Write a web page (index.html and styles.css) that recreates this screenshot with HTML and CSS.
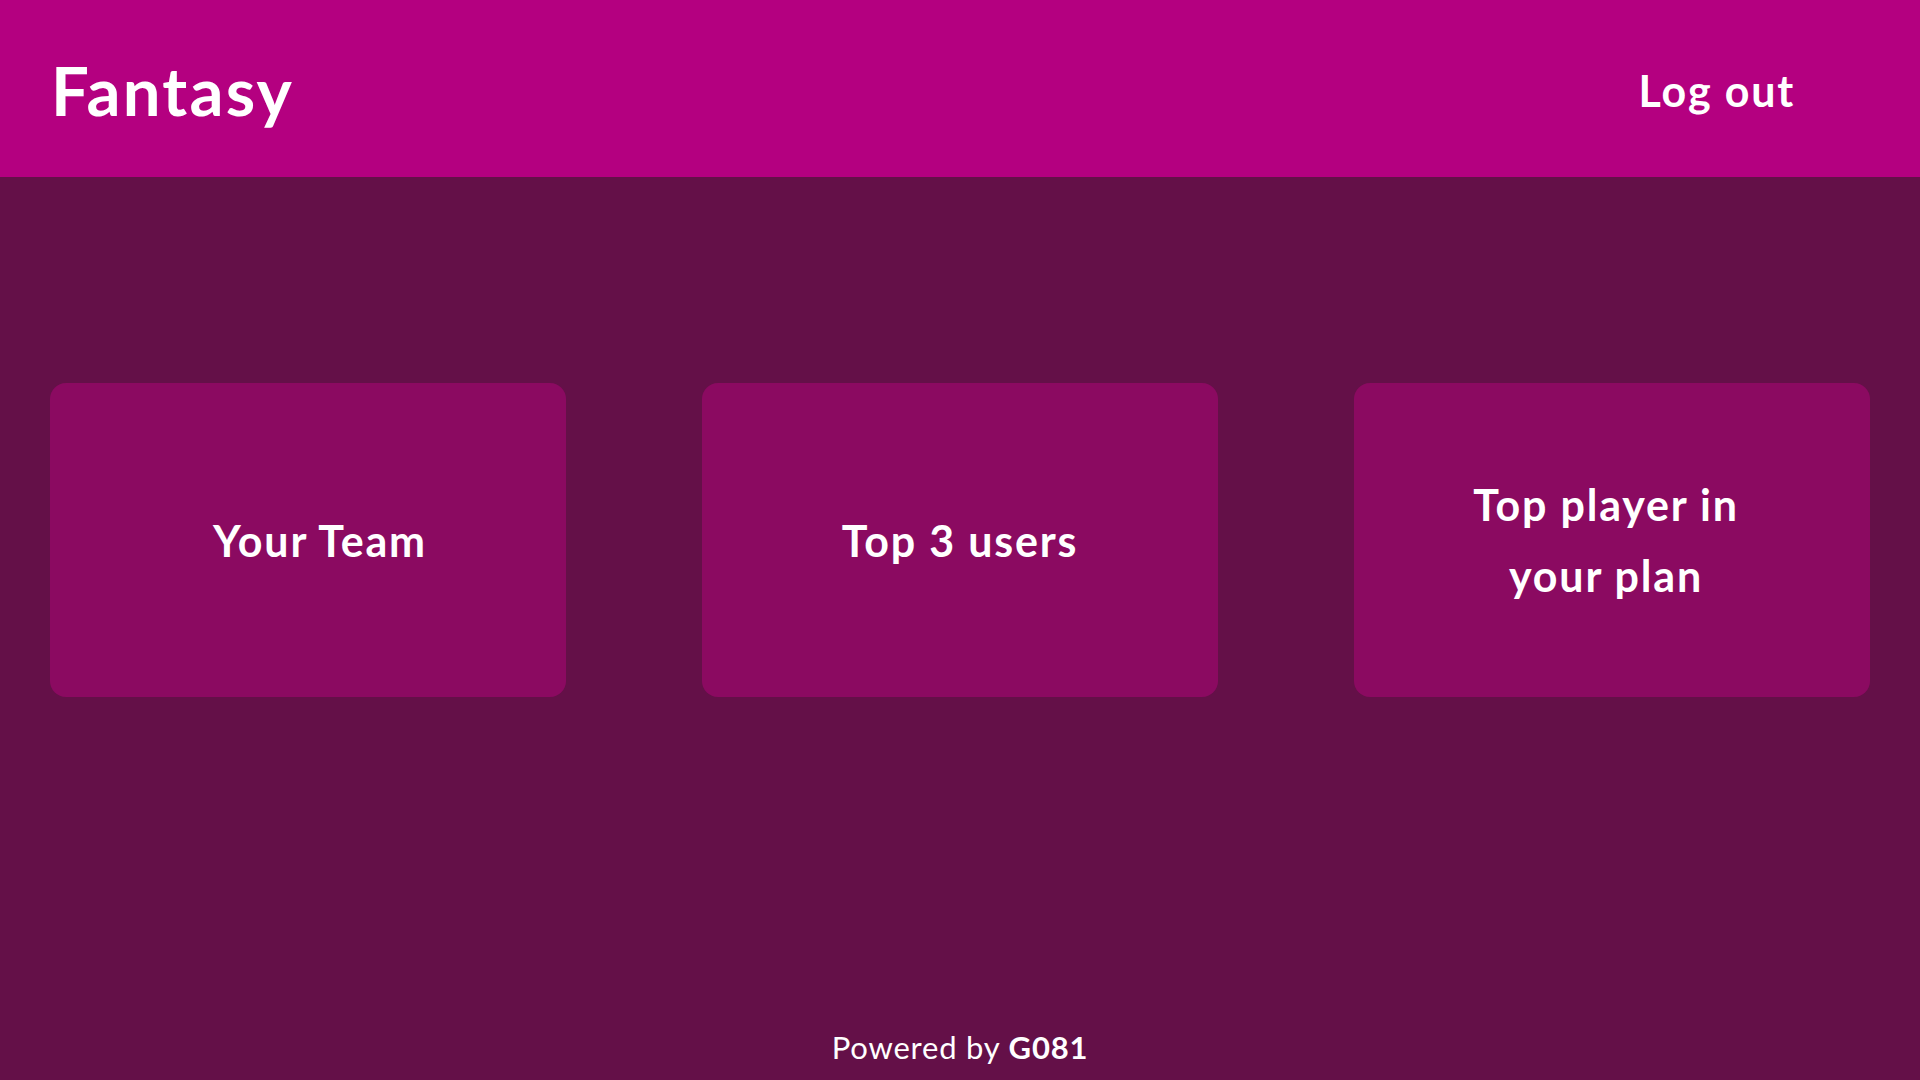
FILE: index.html
```html
<!DOCTYPE html>
<html lang="en">
<head>
<meta charset="utf-8">
<title>Fantasy</title>
<link rel="stylesheet" href="styles.css">
</head>
<body>
<header class="topbar">
  <div class="brand">Fantasy</div>
  <a class="logout" href="#">Log out</a>
</header>
<main class="content">
  <div class="cards">
    <a class="card card-team" href="#"><span>Your Team</span></a>
    <a class="card" href="#"><span>Top 3 users</span></a>
    <a class="card card-player" href="#"><span>Top player in<br>your plan</span></a>
  </div>
</main>
<footer class="footer">Powered by <b>G081</b></footer>
</body>
</html>
```
FILE: styles.css
```css
* { box-sizing: border-box; }
html, body { margin: 0; padding: 0; }
body {
  height: 100vh;
  background: #641048;
  color: #ffffff;
  font-family: Lato, "Noto Sans", sans-serif;
  display: flex;
  flex-direction: column;
  overflow: hidden;
}
.topbar {
  height: 177px;
  flex: none;
  background: #b40080;
  display: flex;
  align-items: center;
  justify-content: space-between;
  padding: 0 125px 0 51px;
}
.brand {
  font-size: 67px;
  font-weight: 700;
  line-height: 1;
  letter-spacing: 2.2px;
  margin-top: 4px;
}
.logout {
  color: #ffffff;
  text-decoration: none;
  font-size: 43px;
  font-weight: 700;
  line-height: 1;
  letter-spacing: 1.8px;
  margin-top: 4px;
}
.content {
  flex: 1;
  padding: 206px 50px 0;
}
.cards {
  display: flex;
  gap: 136px;
}
.card {
  flex: 1;
  height: 314px;
  background: #8b0a61;
  border-radius: 16px;
  display: flex;
  align-items: center;
  justify-content: center;
  text-align: center;
  color: #ffffff;
  text-decoration: none;
  font-size: 43px;
  font-weight: 700;
  line-height: 71px;
  letter-spacing: 1.8px;
}
.card-team span { margin-left: 24px; }
.card-player span { margin-right: 12px; }
.footer {
  flex: none;
  text-align: center;
  font-size: 31px;
  line-height: 1;
  letter-spacing: 0.8px;
  padding-bottom: 17px;
}
.footer b { font-weight: 700; }
```
